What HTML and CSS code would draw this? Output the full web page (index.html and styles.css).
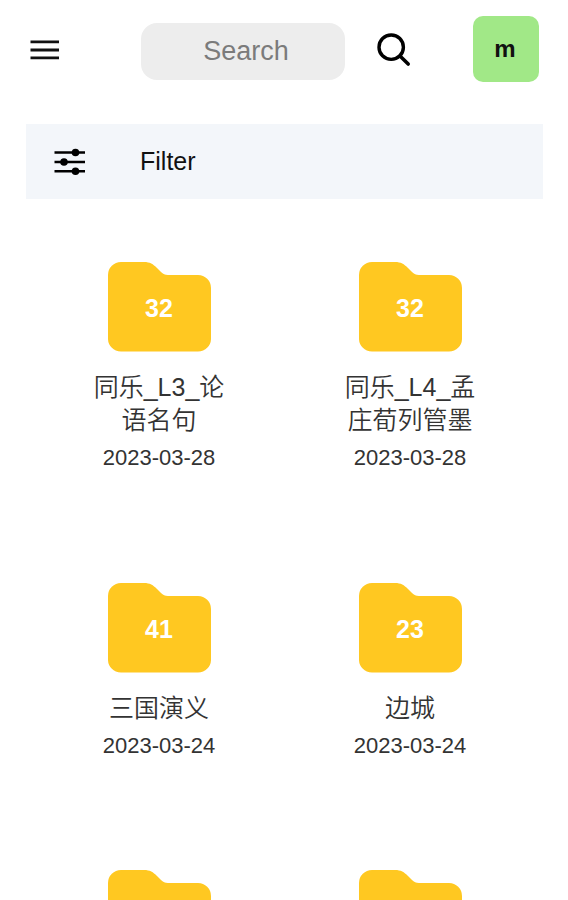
FILE: index.html
```html
<!DOCTYPE html>
<html lang="zh-CN">
<head>
    <meta charset="UTF-8">
    <title>Folders</title>
    <link rel="stylesheet" href="styles.css">
</head>
<body>
    <svg class="sprite" width="0" height="0">
        <symbol id="folder" viewBox="0 0 103 90">
            <path d="M13 0H36C42 0 45 2 49 6L53 10C55 12 57 13 60 13H90A13 13 0 0 1 103 26V76A13 13 0 0 1 90 89.500H13A13 13 0 0 1 0 76V13A13 13 0 0 1 13 0Z" fill="#ffc821"/>
        </symbol>
    </svg>

    <header class="topbar">
        <button class="menu-button" type="button" aria-label="Menu">
            <svg width="30" height="20" viewBox="0 0 30 20">
                <path d="M0.500 1.800H29M0.500 10H29M0.500 17.800H29" stroke="#111" stroke-width="2.800"/>
            </svg>
        </button>
        <input class="search-input" type="text" placeholder="Search" aria-label="Search">
        <button class="search-button" type="button" aria-label="Search">
            <svg width="34" height="34" viewBox="0 0 34 34" fill="none" stroke="#000">
                <circle cx="14.200" cy="14.200" r="12.200" stroke-width="3.400"/>
                <path d="M23 23L31.200 31" stroke-width="3.600" stroke-linecap="round"/>
            </svg>
        </button>
        <div class="avatar">m</div>
    </header>

    <div class="filter-bar">
        <svg width="32" height="28" viewBox="0 0 32 28">
            <path d="M0.500 4.500H31M0.500 14H31M0.500 23.300H31" stroke="#000" stroke-width="2.600"/>
            <circle cx="21.500" cy="4.500" r="3.800"/>
            <circle cx="10" cy="14" r="3.800"/>
            <circle cx="21.500" cy="23.300" r="3.800"/>
        </svg>
        <span>Filter</span>
    </div>

    <main class="folders">
        <div class="folder">
            <div class="folder-icon">
                <svg><use href="#folder"/></svg>
                <span class="count">32</span>
            </div>
            <div class="name">同乐_L3_论语名句</div>
            <div class="date">2023-03-28</div>
        </div>
        <div class="folder">
            <div class="folder-icon">
                <svg><use href="#folder"/></svg>
                <span class="count">32</span>
            </div>
            <div class="name">同乐_L4_孟庄荀列管墨</div>
            <div class="date">2023-03-28</div>
        </div>
        <div class="folder">
            <div class="folder-icon">
                <svg><use href="#folder"/></svg>
                <span class="count">41</span>
            </div>
            <div class="name">三国演义</div>
            <div class="date">2023-03-24</div>
        </div>
        <div class="folder">
            <div class="folder-icon">
                <svg><use href="#folder"/></svg>
                <span class="count">23</span>
            </div>
            <div class="name">边城</div>
            <div class="date">2023-03-24</div>
        </div>
        <div class="folder">
            <div class="folder-icon">
                <svg><use href="#folder"/></svg>
            </div>
        </div>
        <div class="folder">
            <div class="folder-icon">
                <svg><use href="#folder"/></svg>
            </div>
        </div>
    </main>
</body>
</html>
```
FILE: styles.css
```css
* {
    box-sizing: border-box;
}
body {
    margin: 0;
    height: 900px;
    overflow: hidden;
    background-color: #fff;
    color: #111;
    font-family: "Liberation Sans", "Noto Sans CJK SC", sans-serif;
}
svg {
    display: block;
}
.sprite {
    position: absolute;
}
button {
    padding: 0;
    border: none;
    background: none;
    cursor: pointer;
}
.topbar {
    display: flex;
    align-items: center;
    height: 98px;
    padding: 0 29px 0 30px;
}
.menu-button {
    margin-top: 2px;
}
.search-input {
    width: 204px;
    height: 57px;
    margin: 4px 0 0 81px;
    padding: 0 4px 0 10px;
    border: none;
    border-radius: 16px;
    background-color: #ededed;
    font-family: inherit;
    font-size: 27px;
    text-align: center;
}
.search-input::placeholder {
    color: #7b7b7b;
}
.search-button {
    margin: 2px 0 0 32px;
}
.avatar {
    width: 66px;
    height: 66px;
    margin-left: auto;
    padding-right: 2px;
    border-radius: 10px;
    background-color: #a1e887;
    font-size: 24px;
    font-weight: bold;
    line-height: 66px;
    text-align: center;
}
.filter-bar {
    display: flex;
    align-items: center;
    gap: 54px;
    height: 75px;
    margin: 26px 25px 0 26px;
    padding-left: 28px;
    background-color: #f3f6fa;
    font-size: 25px;
}
.folders {
    display: grid;
    grid-template-columns: 251px 251px;
    row-gap: 109.5px;
    padding: 63px 0 0 33.5px;
}
.folder {
    display: flex;
    flex-direction: column;
    align-items: center;
    text-align: center;
}
.folder-icon {
    position: relative;
    width: 103px;
    height: 90px;
}
.folder-icon svg {
    width: 100%;
    height: 100%;
}
.count {
    position: absolute;
    top: 31px;
    left: 0;
    width: 100%;
    color: #fff;
    font-size: 25px;
    font-weight: bold;
    line-height: 30px;
}
.name {
    width: 136px;
    margin-top: 19px;
    color: #333;
    font-size: 25px;
    font-weight: 350;
    line-height: 33px;
    word-break: break-all;
}
.date {
    margin-top: 6px;
    color: #333;
    font-size: 22px;
    line-height: 30px;
}
```
